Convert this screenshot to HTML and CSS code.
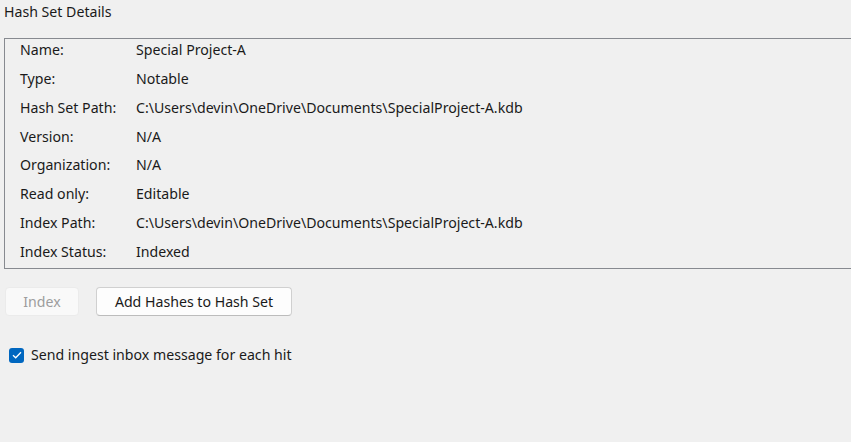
FILE: index.html
```html
<!DOCTYPE html>
<html>
<head>
<meta charset="utf-8">
<link rel="stylesheet" href="styles.css">
</head>
<body>
<div class="page">
  <div class="title">Hash Set Details</div>
  <div class="box">
    <div class="label">Name:</div><div class="value">Special Project-A</div>
    <div class="label">Type:</div><div class="value">Notable</div>
    <div class="label">Hash Set Path:</div><div class="value">C:\Users\devin\OneDrive\Documents\SpecialProject-A.kdb</div>
    <div class="label">Version:</div><div class="value">N/A</div>
    <div class="label">Organization:</div><div class="value">N/A</div>
    <div class="label">Read only:</div><div class="value">Editable</div>
    <div class="label">Index Path:</div><div class="value">C:\Users\devin\OneDrive\Documents\SpecialProject-A.kdb</div>
    <div class="label">Index Status:</div><div class="value">Indexed</div>
  </div>
  <div class="buttons">
    <button class="btn btn-disabled" disabled>Index</button>
    <button class="btn btn-add">Add Hashes to Hash Set</button>
  </div>
  <label class="check">
    <span class="box-check">
      <svg width="10" height="8" viewBox="0 0 10 8"><path d="M1 4.2 L3.7 6.8 L9 1.2" fill="none" stroke="#fff" stroke-width="1.3"/></svg>
    </span>
    <span class="check-text">Send ingest inbox message for each hit</span>
  </label>
</div>
</body>
</html>
```

FILE: styles.css
```css
html, body {
  margin: 0;
  padding: 0;
  background: #f0f0f0;
  width: 851px;
  height: 442px;
  overflow: hidden;
}
.page {
  font-family: "Noto Sans", "Open Sans", sans-serif;
  font-size: 14.15px;
  color: #1a1a1a;
  padding: 2px 0 0 4px;
}
.title {
  line-height: 20px;
  height: 20px;
}
.box {
  margin-top: 16px;
  border: 1px solid #878a90;
  border-right: none;
  display: grid;
  grid-template-columns: 116px 1fr;
  grid-auto-rows: 20px;
  row-gap: 8.86px;
  padding: 1px 0 6px 15px;
  line-height: 20px;
}
.label, .value {
  white-space: nowrap;
}
.buttons {
  display: flex;
  gap: 17px;
  margin-top: 18px;
  padding-left: 1px;
}
.btn {
  font-family: inherit;
  font-size: 14.15px;
  height: 29px;
  border-radius: 4px;
  padding: 0;
  box-sizing: border-box;
}
.btn-disabled {
  width: 74px;
  background: #f9f9f9;
  border: 1px solid #ebebeb;
  color: #9d9d9d;
}
.btn-add {
  width: 196px;
  background: #fdfdfd;
  border: 1px solid #d0d0d0;
  border-bottom-color: #bcbcbc;
  color: #1a1a1a;
}
.check {
  display: flex;
  align-items: center;
  gap: 7px;
  margin-top: 29px;
  padding-left: 5px;
}
.box-check {
  width: 15px;
  height: 15px;
  border-radius: 3px;
  background: #0067c0;
  display: flex;
  align-items: center;
  justify-content: center;
}
.check-text {
  line-height: 20px;
}
```
